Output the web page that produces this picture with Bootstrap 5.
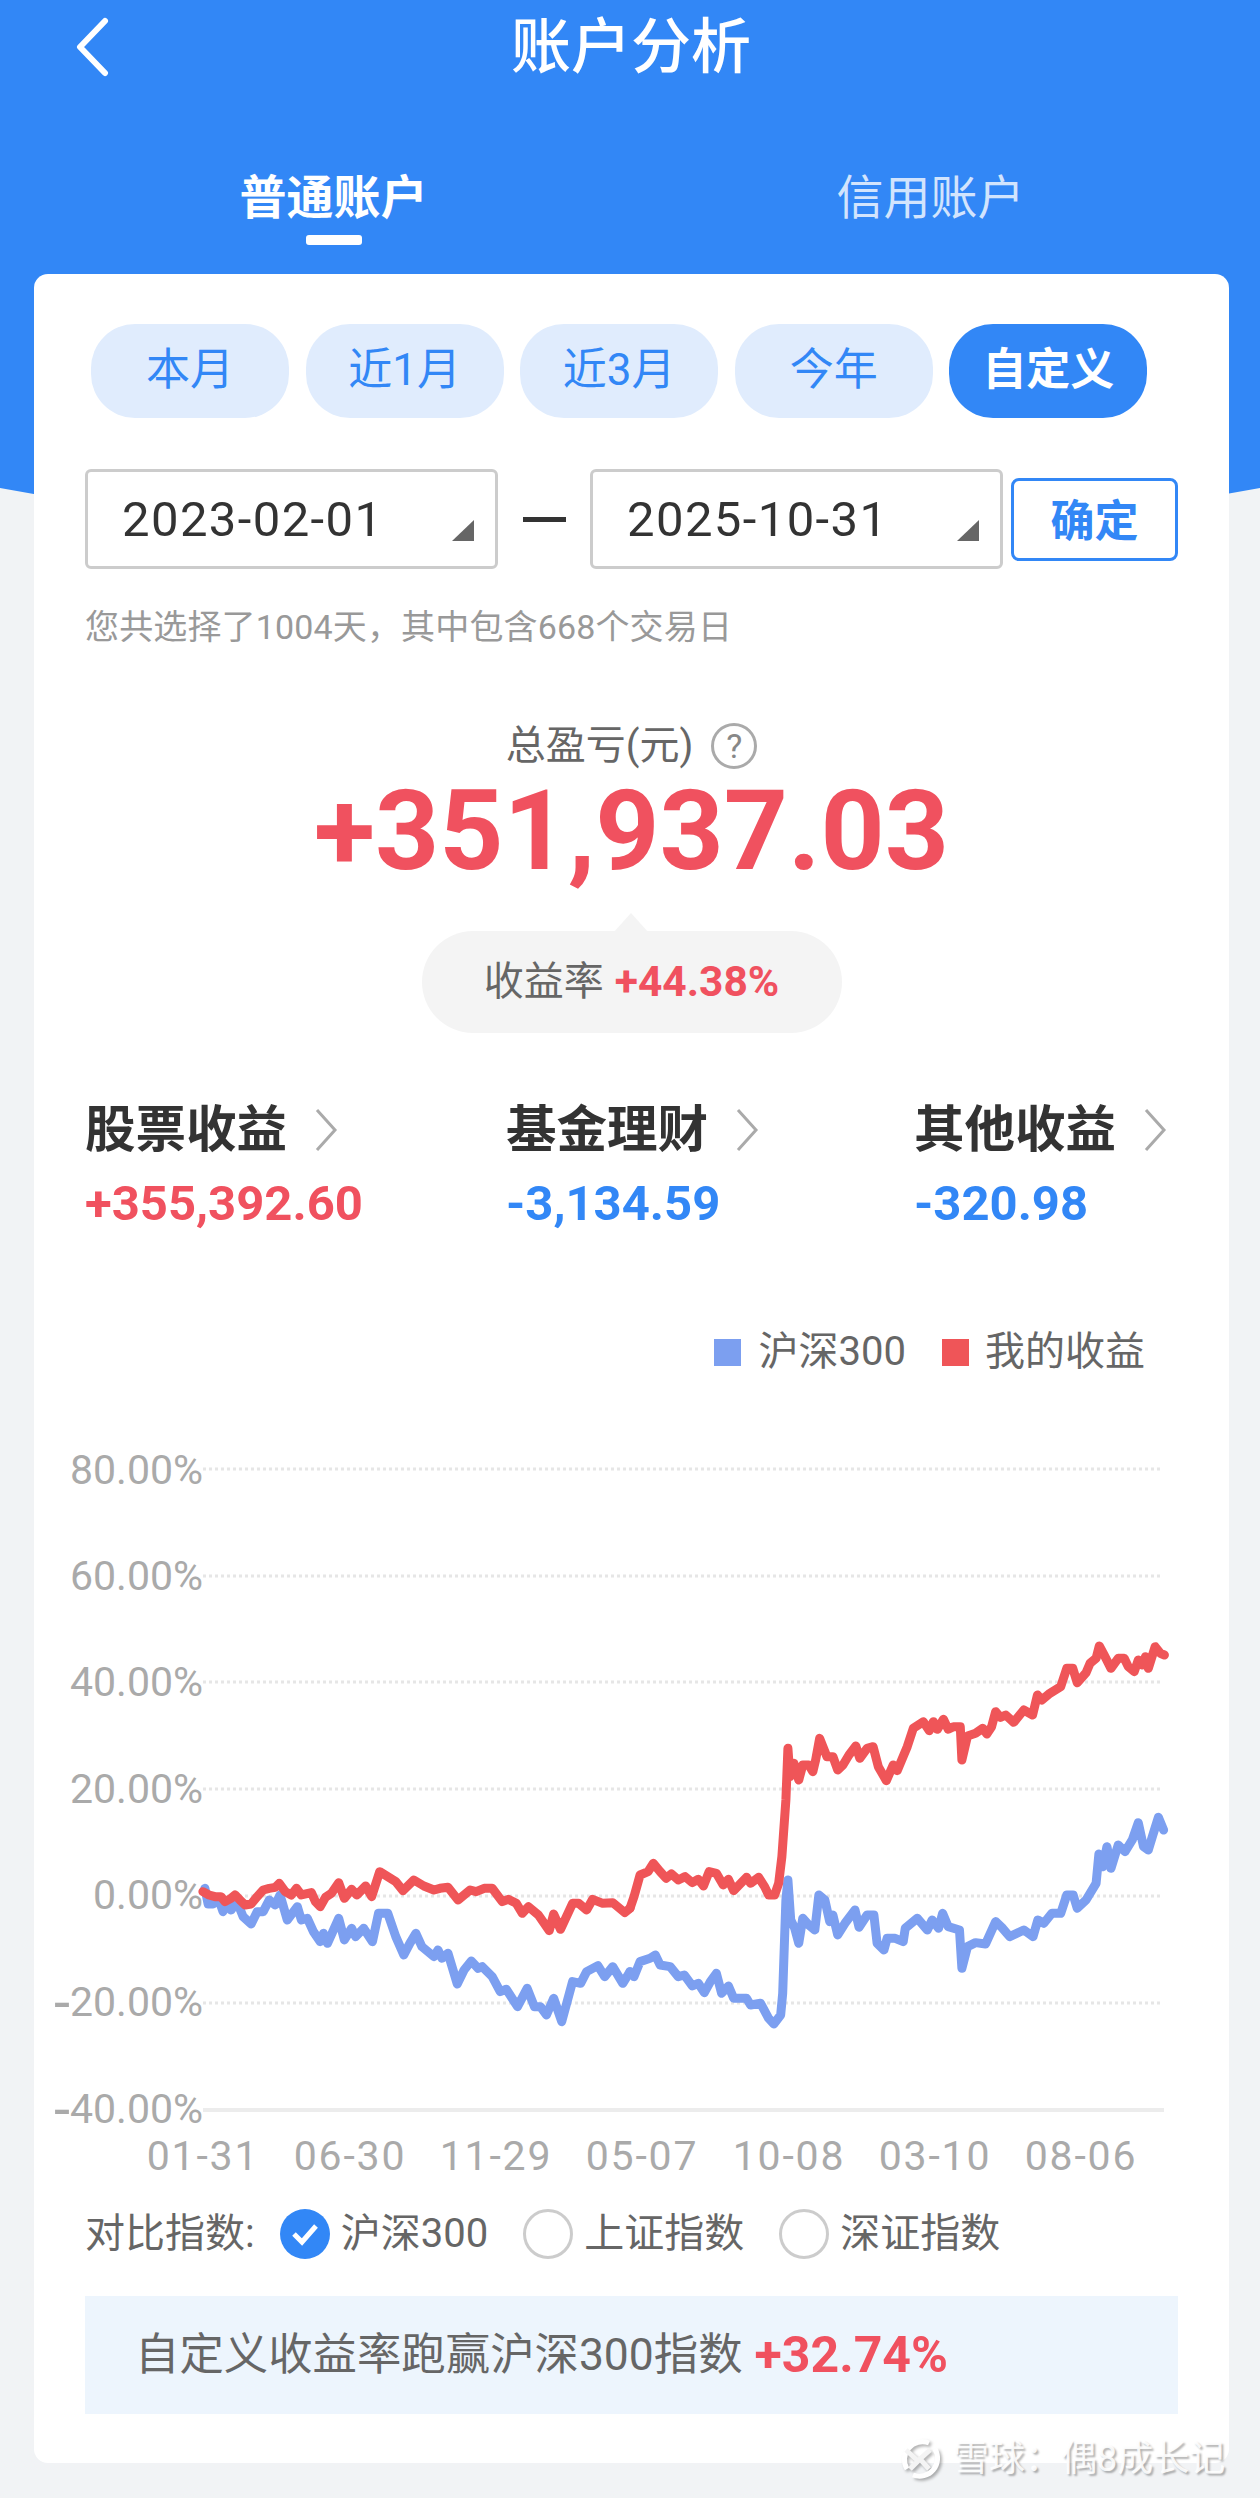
<!DOCTYPE html>
<html lang="zh">
<head>
<meta charset="utf-8">
<title>账户分析</title>
<link rel="stylesheet" href="https://cdn.jsdelivr.net/npm/bootstrap@5.3.0/dist/css/bootstrap.min.css">
<style>
html,body{background:#f1f3f5;font-family:Roboto,"Noto Sans CJK SC",sans-serif;color:#333;overflow:hidden}
.app-shell{width:1260px;height:2498px;position:relative;overflow:hidden}
.app-head{background:#3287f6;height:600px;clip-path:polygon(0 0,100% 0,100% 488px,50% 600px,0 488px);color:#fff}
.title-row{display:grid;grid-template-columns:1fr auto 1fr;height:96px;align-items:center;padding:0 75px}
.app-title{font-size:60px;font-weight:500;line-height:90px;margin-right:-2px}
.back-ico{display:block;margin-top:-2px}
.tab-row{display:grid;grid-template-columns:1fr 1fr;padding:0 31px 0 35px;margin-top:72px;text-align:center}
.tab-txt{font-size:47px;line-height:60px;color:rgba(255,255,255,.78)}
.tab-on{font-weight:700;color:#fff}
.tab-line{width:56px;height:10px;border-radius:3px;background:#fff;margin:7px auto 0}
.main-card{margin:-326px 0 0 34px;width:1195px;height:2189px;background:#fff;border-radius:14px;padding:50px 51px 0;position:relative}
.range-row{display:flex;gap:16.6px;margin-left:6px}
.range-pill{width:198px;height:94px;border-radius:44px;background:#e0ecfd;color:#3287f6;font-size:44px;line-height:92px;text-align:center}
.range-on{background:#3287f6;color:#fff;font-weight:700}
.date-row{display:flex;align-items:center;height:100px;margin-top:51px}
.date-box{width:413px;height:100px;border:3px solid #ccc;border-radius:6px;padding-left:34px;font-size:49px;letter-spacing:1.4px;line-height:96px;color:#333;position:relative}
.date-box::after{content:"";position:absolute;right:21px;bottom:25px;border-left:22px solid transparent;border-bottom:21px solid #666}
.date-dash{width:92px;display:flex;justify-content:center}
.date-dash i{display:block;width:43px;height:5px;background:#333}
.ok-btn{width:167px;height:83px;margin-left:8px;border:3px solid #3287f6;border-radius:8px;background:#fff;color:#3287f6;font-size:44px;font-weight:700;line-height:1;padding:5px 0 0}
.hint-txt{font-size:34px;letter-spacing:.15px;line-height:46px;color:#999;margin-top:35px}
.sum-label{display:flex;justify-content:center;align-items:center;gap:18px;margin-top:71px;height:50px;font-size:40px;color:#666}
.help-dot{width:46px;height:46px;border:3px solid #aaa;border-radius:50%;font-size:34px;line-height:40px;text-align:center;color:#888}
.sum-num{font-size:112px;font-weight:700;line-height:110px;text-align:center;color:#f0515f;margin-top:5px}
.rate-bubble{width:420px;height:102px;margin:45px auto 0;background:#f4f4f4;border-radius:51px;display:flex;justify-content:center;align-items:center;gap:11px;font-size:40px;color:#666;position:relative}
.rate-bubble .up-txt{font-size:42.5px}
.rate-bubble::before{content:"";position:absolute;left:192px;top:-18px;border-left:17px solid transparent;border-right:17px solid transparent;border-bottom:19px solid #f4f4f4}
.up-txt{color:#f0515f;font-weight:700}
.stat-grid{display:grid;grid-template-columns:421px 408px 1fr;margin-top:65px}
.stat-head{display:flex;align-items:center;gap:27px;height:64px;font-size:50.5px;font-weight:700;color:#333}
.stat-val{font-size:49px;font-weight:700;line-height:56px;margin-top:14px}
.down-txt{color:#3287f6}
.legend-row{display:flex;justify-content:flex-end;align-items:center;height:50px;margin-top:95px;padding-right:33px;font-size:40px;color:#666}
.leg-mark{width:27px;height:27px;margin-right:18px}
.leg-blue{background:#7c9ff0}
.leg-red{background:#ef5558;margin-left:36px;margin-right:16px}
.chart-svg{display:block;width:1195px;height:813px;margin-left:-51px}
.chart-svg text{font-family:Roboto,sans-serif;font-size:41px;fill:#aaa}
.chart-svg .x-tick{letter-spacing:1.8px}
.chart-svg .neg-sign{font-size:58px}
.grid-line{stroke:#e6e6e6;stroke-width:3;stroke-dasharray:3 3;fill:none}
.base-line{stroke:#ececec;stroke-width:4;fill:none}
.series{fill:none;stroke-width:9;stroke-linejoin:round;stroke-linecap:round;vector-effect:non-scaling-stroke}
.compare-row{display:flex;align-items:center;height:50px;margin-top:19px;font-size:40px;color:#666}
.radio-dot{width:50px;height:50px;border-radius:50%;border:3px solid #ccc;margin:0 11px 0 35px;flex:none}
.radio-on{background:#3287f6;border:0;margin-left:25px;display:flex;align-items:center;justify-content:center}
.beat-bar{height:118px;margin-top:37px;background:#edf5fd;padding-left:50px;display:flex;align-items:center;gap:12px;font-size:44.4px;color:#666}
.beat-bar .up-txt{font-size:50px}
.water-mark{position:absolute;left:898px;top:2436px;display:flex;align-items:center;gap:9px;font-size:36px;line-height:44px;color:rgba(255,255,255,.9);text-shadow:2px 2px 2px rgba(0,0,0,.3)}
.water-logo{filter:drop-shadow(2px 2px 1.5px rgba(0,0,0,.3))}
</style>
</head>
<body>
<div class="app-shell">
  <header class="app-head">
    <div class="title-row">
      <svg class="back-ico" width="34" height="60" viewBox="0 0 34 60"><path d="M30 4 L5 30 L30 56" fill="none" stroke="#fff" stroke-width="6" stroke-linecap="round" stroke-linejoin="round"/></svg>
      <div class="app-title">账户分析</div>
      <div></div>
    </div>
    <div class="tab-row">
      <div><div class="tab-txt tab-on">普通账户</div><div class="tab-line"></div></div>
      <div class="tab-txt">信用账户</div>
    </div>
  </header>
  <main class="main-card">
    <div class="range-row">
      <div class="range-pill">本月</div>
      <div class="range-pill">近1月</div>
      <div class="range-pill">近3月</div>
      <div class="range-pill">今年</div>
      <div class="range-pill range-on">自定义</div>
    </div>
    <div class="date-row">
      <div class="date-box">2023-02-01</div>
      <div class="date-dash"><i></i></div>
      <div class="date-box">2025-10-31</div>
      <button class="btn ok-btn" type="button">确定</button>
    </div>
    <div class="hint-txt">您共选择了1004天，其中包含668个交易日</div>
    <div class="sum-label"><span>总盈亏(元)</span><span class="help-dot">?</span></div>
    <div class="sum-num">+351,937.03</div>
    <div class="rate-bubble"><span>收益率</span><span class="up-txt">+44.38%</span></div>
    <div class="stat-grid">
      <div>
        <div class="stat-head"><span>股票收益</span><svg width="24" height="44" viewBox="0 0 24 44"><path d="M3 2 L21 22 L3 42" fill="none" stroke="#aaa" stroke-width="3"/></svg></div>
        <div class="stat-val up-txt">+355,392.60</div>
      </div>
      <div>
        <div class="stat-head"><span>基金理财</span><svg width="24" height="44" viewBox="0 0 24 44"><path d="M3 2 L21 22 L3 42" fill="none" stroke="#aaa" stroke-width="3"/></svg></div>
        <div class="stat-val down-txt">-3,134.59</div>
      </div>
      <div>
        <div class="stat-head"><span>其他收益</span><svg width="24" height="44" viewBox="0 0 24 44"><path d="M3 2 L21 22 L3 42" fill="none" stroke="#aaa" stroke-width="3"/></svg></div>
        <div class="stat-val down-txt">-320.98</div>
      </div>
    </div>
    <div class="legend-row">
      <span class="leg-mark leg-blue"></span><span>沪深300</span>
      <span class="leg-mark leg-red"></span><span>我的收益</span>
    </div>
    <svg class="chart-svg" viewBox="34 1377 1195 813">
      <path class="grid-line" d="M203 1469H1160M203 1576H1160M203 1682H1160M203 1789H1160M203 1896H1160M203 2003H1160"/>
      <path class="base-line" d="M203 2110H1164"/>
      <g text-anchor="end">
        <text x="203" y="1484">80.00%</text>
        <text x="203" y="1590">60.00%</text>
        <text x="203" y="1696">40.00%</text>
        <text x="203" y="1803">20.00%</text>
        <text x="203" y="1909">0.00%</text>
        <text x="203" y="2016"><tspan class="neg-sign" dy="6">-</tspan><tspan dy="-6">20.00%</tspan></text>
        <text x="203" y="2123"><tspan class="neg-sign" dy="6">-</tspan><tspan dy="-6">40.00%</tspan></text>
      </g>
      <g text-anchor="middle" class="x-tick">
        <text x="203" y="2170">01-31</text>
        <text x="350" y="2170">06-30</text>
        <text x="496" y="2170">11-29</text>
        <text x="642" y="2170">05-07</text>
        <text x="789" y="2170">10-08</text>
        <text x="935" y="2170">03-10</text>
        <text x="1081" y="2170">08-06</text>
      </g>
      <g stroke="#7c9ff0">
        <polyline class="series" transform="translate(0,1800) scale(.4018,.3333)" points="510,265 518,312 530,312 545,300 555,335 565,305 575,330 590,305 605,350 625,372 640,335 655,335 670,300 685,315 697,285 715,360 740,320 750,360 765,355 780,395 797,425 805,400 815,430 843,355 857,420 875,385 885,410 905,385 927,425 942,340 965,340 985,410 1005,465 1020,430 1035,400 1050,440 1080,470 1090,450 1100,475 1115,460 1138,552 1155,510 1173,483 1190,505 1200,500 1225,530 1245,575 1260,568 1288,620 1312,565 1330,620 1345,620 1360,645 1378,595 1398,665 1425,545 1445,550 1460,515 1488,497 1505,530 1525,500 1550,550 1568,515"/>
        <polyline class="series" transform="translate(630,1600) scale(.4018,.3333)" points="0,1115 10,1130 25,1085 50,1075 63,1065 75,1095 100,1100 120,1130 135,1125 155,1158 170,1150 185,1178 200,1145 215,1120 228,1180 245,1158 258,1195 290,1195 300,1215 325,1210 345,1255 358,1272 375,1245 380,1180 388,900 393,840 400,960 410,985 420,1030 430,955 445,975 460,990 470,885 485,900 497,965 505,945 517,1005 535,970 560,930 570,982 590,945 607,945 615,1030 632,1050 640,1015 660,1015 680,1025 685,985 715,955 740,990 752,960 768,985 778,940 792,980 820,990 826,1105 840,1040 860,1028 885,1032 910,965 925,982 945,1010 980,990 1003,1010 1015,960 1030,970 1050,940 1072,940 1087,885 1103,885 1113,925 1135,900 1160,850 1167,762 1177,800 1187,740 1197,805 1215,735 1232,755 1250,720 1265,668 1278,740 1290,750 1300,710 1315,652 1328,690"/>
      </g>
      <g stroke="#ef5558">
        <polyline class="series" transform="translate(0,1800) scale(.4018,.3333)" points="505,275 520,285 535,290 550,290 560,305 575,295 585,285 597,300 610,315 625,312 640,290 655,270 670,265 685,262 695,250 710,275 725,285 738,265 750,285 775,278 785,305 797,320 810,292 825,280 843,248 857,295 875,268 888,285 910,258 925,290 945,215 965,230 985,245 1003,272 1030,240 1055,258 1080,270 1095,265 1115,262 1140,300 1170,270 1185,275 1205,265 1225,265 1250,305 1265,298 1285,310 1300,340 1315,320 1340,345 1367,392 1378,342 1395,388 1425,310 1440,310 1460,330 1475,298 1500,310 1525,308 1555,338 1568,325"/>
        <polyline class="series" transform="translate(630,1600) scale(.4018,.3333)" points="0,925 10,890 25,825 45,815 58,790 75,815 90,835 103,822 120,840 137,830 155,848 170,838 183,858 197,815 215,820 232,855 245,838 258,872 290,832 300,850 320,832 335,860 345,885 360,885 370,850 378,770 388,600 393,445 398,530 408,490 420,540 430,495 445,495 455,515 462,480 472,415 490,470 505,470 517,510 530,495 545,465 562,438 572,475 590,445 605,440 618,500 638,542 655,495 665,512 690,440 705,385 730,365 745,392 755,365 765,388 780,358 792,388 805,380 822,380 826,480 840,408 860,400 878,385 888,402 900,380 910,335 922,352 935,345 955,367 980,330 1002,345 1014,285 1025,300 1045,280 1072,260 1087,205 1102,205 1113,248 1135,218 1145,190 1160,175 1168,138 1180,165 1197,205 1215,175 1230,175 1240,200 1255,215 1265,180 1275,195 1283,170 1290,205 1307,140 1320,160 1330,165"/>
      </g>
    </svg>
    <div class="compare-row">
      <span>对比指数:</span>
      <span class="radio-dot radio-on"><svg width="28" height="24" viewBox="0 0 28 24"><path d="M3 12 L11 20 L25 4" fill="none" stroke="#fff" stroke-width="5"/></svg></span><span>沪深300</span>
      <span class="radio-dot"></span><span>上证指数</span>
      <span class="radio-dot"></span><span>深证指数</span>
    </div>
    <div class="beat-bar"><span>自定义收益率跑赢沪深300指数</span><span class="up-txt">+32.74%</span></div>
  </main>
  <div class="water-mark">
    <svg class="water-logo" width="46" height="46" viewBox="0 0 46 46"><path d="M9 33 A18 18 0 0 1 31 7 M37 13 A18 18 0 0 1 15 39" fill="none" stroke="#fff" stroke-width="5"/><path d="M8 14 L20 25 L12 33 M32 14 L22 23 L31 33" fill="none" stroke="#f4f4f4" stroke-width="5"/></svg>
    <span>雪球：偶8成长记</span>
  </div>
</div>
</body>
</html>
